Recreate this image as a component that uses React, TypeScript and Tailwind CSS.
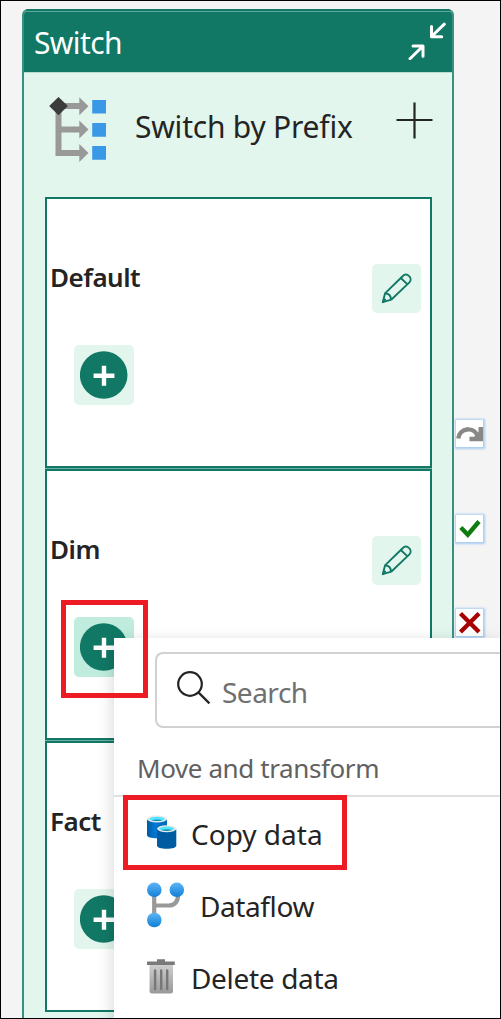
import React from "react";

function PlusBadge({ active = false }: { active?: boolean }) {
  return (
    <button
      aria-label="Add activity"
      className={`flex size-[60px] items-center justify-center rounded-[5px] ${active ? "bg-[#c0ecdd]" : "bg-[#e2f6ed]"}`}
    >
      <svg width="48" height="48" viewBox="0 0 48 48">
        <circle cx="23.7" cy="24" r="23.8" fill="#117865" />
        <path d="M13.6 24.800h20.8M24 14.800v20" stroke="#fff" strokeWidth="4.4" fill="none" />
      </svg>
    </button>
  );
}

function PencilButton() {
  return (
    <button aria-label="Edit" className="flex size-[49px] items-center justify-center rounded-[5px] bg-[#e2f6ed]">
      <svg width="49" height="49" viewBox="0 0 49 49" fill="none" stroke="#117865" strokeWidth="1.9" strokeLinejoin="round">
        <path d="M10.8 38.2 13 29.4 30.600 12.2C35 8 41.300 14 37.400 18.400L19.2 35.7Z" />
        <path d="M28.800 14 35.800 20.600M13 29.4c3.8.2 6.1 2.5 5.9 6.3M10.8 38.2l2.8-3.4" />
      </svg>
    </button>
  );
}

function CaseBox({ name, active = false }: { name: string; active?: boolean }) {
  return (
    <section className="flex h-[271px] flex-col border-2 border-[#117865] bg-white">
      <div className="flex h-[114px] items-end justify-between pr-[9px]">
        <h3 className="mb-[18px] ml-[3px] text-[26px] leading-[36px] font-semibold tracking-[-0.5px]">{name}</h3>
        <PencilButton />
      </div>
      <div className="mt-[32px] ml-[27px]">
        <PlusBadge active={active} />
      </div>
    </section>
  );
}

function Port({ children }: { children: React.ReactNode }) {
  return (
    <div className="flex size-[27px] items-center justify-center bg-white shadow-[0_0_2px_1.5px_#a9cef0]">{children}</div>
  );
}

function SwitchIcon() {
  return (
    <svg width="60" height="68" viewBox="0 0 60 68" className="shrink-0">
      <path d="M9.500 10v46h16M9.500 32.5h16M9.500 9h16" fill="none" stroke="#999" strokeWidth="6" />
      <path d="M30.300 .2v18l9.200-9zM30.300 23.500v18l9.200-9zM30.300 47v18l9.200-9z" fill="#999" />
      <path d="M25 9h6M25 32.500h6M25 56h6" stroke="#999" strokeWidth="6" />
      <path d="M9.500 0 18.900 9.100 9.500 18.300 .2 9.100Z" fill="#3b3b3b" />
      <path d="M43.200 2.900h13.800v13.700H43.200zM43.200 26h13.800v13.700H43.200zM43.200 49h13.800v13.700H43.200z" fill="#3999e6" />
    </svg>
  );
}

function CopyIcon() {
  return (
    <svg width="30" height="35" viewBox="0 0 30 35" className="-mt-[2px] shrink-0">
      <defs>
        <linearGradient id="can" x1="0" x2="1"><stop stopColor="#005ba1" /><stop offset=".4" stopColor="#0078d4" /><stop offset="1" stopColor="#0068b8" /></linearGradient>
      </defs>
      <path d="M0 4.500v15.500c0 2 4 3.300 10 3.300s10-1.300 10-3.300V4.500z" fill="url(#can)" />
      <ellipse cx="10" cy="4" rx="10" ry="3.500" fill="#e8e8e8" />
      <ellipse cx="10" cy="4" rx="7.700" ry="2.200" fill="#50e6ff" />
      <path d="M4.500 5.200Q10 3.600 15.500 5.200 10 7 4.500 5.200" fill="#198ab3" />
      <path d="M10 14.500v16c0 2 4 3.300 9.700 3.300s9.600-1.300 9.600-3.300v-16z" fill="#005ba1" />
      <ellipse cx="19.700" cy="13.700" rx="9.600" ry="3.500" fill="#e8e8e8" />
      <ellipse cx="19.700" cy="13.700" rx="7.500" ry="2.200" fill="#50e6ff" />
      <path d="M14.200 15Q19.700 13.400 25.200 15 19.700 16.800 14.200 15" fill="#198ab3" />
    </svg>
  );
}

function DataflowIcon() {
  return (
    <svg width="38" height="46" viewBox="0 0 38 46" className="shrink-0">
      <defs>
        <linearGradient id="ball" x1="0" x2="0" y1="0" y2="1"><stop stopColor="#5eb5f6" /><stop offset="1" stopColor="#0f7fd8" /></linearGradient>
      </defs>
      <path d="M7.200 9v27M7.200 23.500h14.500c7 0 9.500-4.500 9.500-12" fill="none" stroke="#999" strokeWidth="4.200" />
      <circle cx="7.300" cy="7.800" r="7.300" fill="url(#ball)" />
      <circle cx="29.800" cy="7.800" r="7.300" fill="url(#ball)" />
      <circle cx="7.300" cy="38" r="7.300" fill="url(#ball)" />
    </svg>
  );
}

function TrashIcon() {
  return (
    <svg width="28" height="35" viewBox="0 0 28 35" className="-mt-px shrink-0">
      <defs>
        <linearGradient id="bin" x1="0" x2="0" y1="0" y2="1"><stop stopColor="#cfcfcf" /><stop offset="1" stopColor="#999" /></linearGradient>
      </defs>
      <path d="M2.500 5h23.500v27.200q0 2.300-2.300 2.300H5q-2.300 0-2.400-2.300z" fill="url(#bin)" />
      <path d="M10 2.600V.3h8v2.300h9.800v3.500H0V2.600z" fill="#7a7a7a" />
      <path d="M8.100 11.500v18.500M14.200 11.500v18.500M20.200 11.500v18.500" stroke="#777" strokeWidth="2.400" strokeLinecap="round" />
    </svg>
  );
}

export default function App() {
  return (
    <main className="relative flex h-[1019px] w-[501px] overflow-hidden border border-black bg-[#f4f4f4] font-['Noto_Sans','Open_Sans',sans-serif] text-[#242424]">
      <article className="mt-[8px] ml-[21px] h-[1030px] w-[432px] shrink-0 overflow-hidden rounded-t-[6px] border-x-2 border-[#3a9080] bg-[#e2f6ed]">
        <header className="border-t-2 border-[#117865] bg-[#117865]">
          <div className="flex h-[61px] justify-between border-t border-[#5fa598] pr-[6px] pl-[10px] text-white">
            <h1 className="mt-[9px] text-[30px] leading-[44px] tracking-[-0.6px] whitespace-nowrap">Switch</h1>
            <svg width="38" height="38" viewBox="0 0 38 38" className="mt-[10px]" fill="none" stroke="#fff" strokeWidth="3" strokeLinecap="round" strokeLinejoin="round">
              <path d="M36.300 2.200 23.500 14.500M23.500 4.500v10.200h10.200M2 36.800 14.800 24.300M5 24h10v10.200" />
            </svg>
          </div>
        </header>
        <div className="flex h-[125px] border-t border-[#b9ddd2] pl-[25px]">
          <div className="mt-[24px]"><SwitchIcon /></div>
          <h2 className="mt-[32px] ml-[26px] w-[221px] text-[30px] leading-[44px] tracking-[-0.22px] whitespace-nowrap">Switch by Prefix</h2>
          <svg width="37" height="37" viewBox="0 0 37 37" className="mt-[29px] ml-[40px]" stroke="#242424" strokeWidth="2.200">
            <path d="M.5 18h36M18.500.5v36" />
          </svg>
        </div>
        <div className="ml-[21px] flex w-[387px] flex-col gap-px bg-[#71aea2]">
          <CaseBox name="Default" />
          <CaseBox name="Dim" active />
          <CaseBox name="Fact" />
        </div>
      </article>

      <aside className="ml-[2px] flex shrink-0 flex-col gap-[67.500px] pt-[419px]">
        <Port>
          <svg width="27" height="27" viewBox="0 0 27 27">
            <path d="M2.300 18.500A10 10 0 0 1 21.500 15.500" fill="none" stroke="#8a8886" strokeWidth="4.400" />
            <path d="M27 7v14.300H13.500v-4.600h4.700L22.500 12V7z" fill="#8a8886" />
          </svg>
        </Port>
        <Port>
          <svg width="27" height="27" viewBox="0 0 27 27" fill="none" stroke="#107c10" strokeWidth="4.400">
            <path d="m4.800 12.500 7 7.200L23 6.500" />
          </svg>
        </Port>
        <Port>
          <svg width="27" height="27" viewBox="0 0 27 27" fill="none" stroke="#a80000" strokeWidth="4.300">
            <path d="m4.500 4.500 18.500 18.500M23 4.500l-18.500 18.500" />
          </svg>
        </Port>
      </aside>

      <nav className="absolute top-[637px] left-[113px] flex h-[390px] w-[386px] flex-col bg-white shadow-[0_5px_16px_rgba(0,0,0,0.18)]">
        <div className="mt-[14px] ml-[41px] flex h-[76px] shrink-0 items-center rounded-l-[8px] border-2 border-r-0 border-[#d1d1d1] pl-[20px]">
          <svg width="34" height="34" viewBox="0 0 34 34" className="-mt-1" fill="none" stroke="#242424" strokeWidth="2.200">
            <circle cx="13" cy="13" r="11.800" />
            <path d="m21.400 21.400 11 11" />
          </svg>
          <span className="mt-[4px] ml-[11px] text-[28px] leading-[40px] tracking-[-0.5px] text-[#707070]">Search</span>
        </div>
        <h4 className="ml-[23px] flex h-[67px] shrink-0 items-center pt-[13px] text-[26px] leading-[36px] tracking-[-0.4px] text-[#616161]">Move and transform</h4>
        <hr className="border-t-2 border-[#e0e0e0]" />
        <ul className="flex flex-col pl-[33px] text-[28px] leading-[40px] whitespace-nowrap">
          <li className="flex h-[72px] items-center"><CopyIcon /><span className="mt-px ml-[14px]">Copy data</span></li>
          <li className="flex h-[72px] items-center"><DataflowIcon /><span className="mt-px ml-[15px] tracking-[-0.4px]">Dataflow</span></li>
          <li className="flex h-[72px] items-center"><TrashIcon /><span className="mt-px ml-[16px] tracking-[-0.32px]">Delete data</span></li>
        </ul>
      </nav>

      <div className="pointer-events-none absolute top-[599px] left-[60px] h-[98px] w-[87px] border-[5px] border-[#ed1c24]" />
      <div className="pointer-events-none absolute top-[794px] left-[122px] h-[75px] w-[224px] border-[5px] border-[#ed1c24]" />
    </main>
  );
}
